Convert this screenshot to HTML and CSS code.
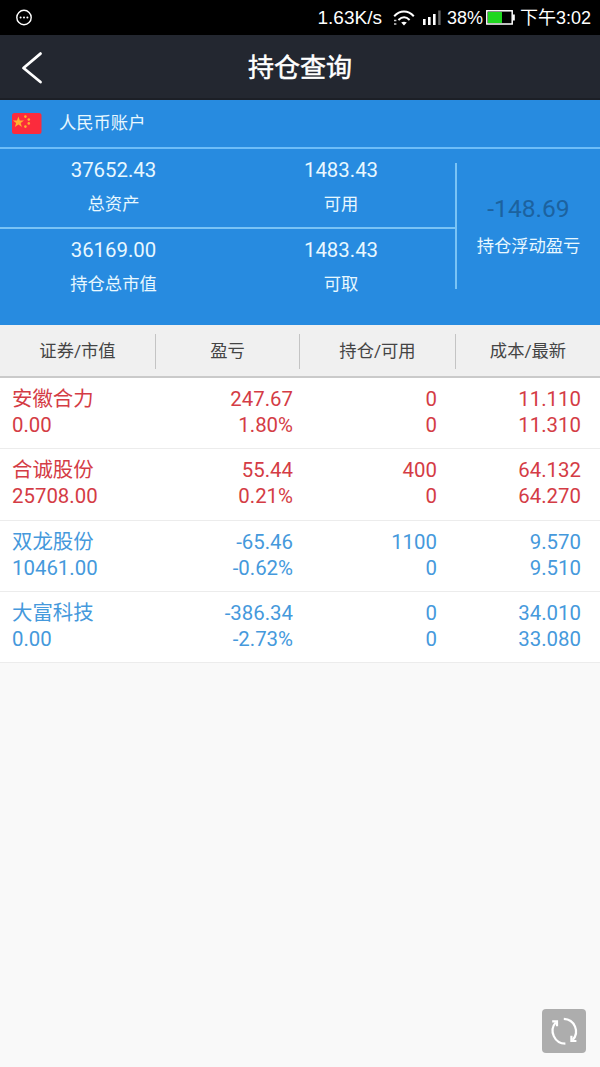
FILE: index.html
```
<!DOCTYPE html>
<html lang="zh-CN">
<head>
    <meta charset="UTF-8">
    <meta name="viewport" content="width=device-width, initial-scale=1.0">
    <title>持仓查询</title>
    <link rel="stylesheet" href="styles.css">
</head>
<body>
    <div class="status-bar">
        <svg class="status-msg" width="18" height="18" viewBox="0 0 18 18">
            <circle cx="9" cy="8.5" r="7.2" fill="none" stroke="#fff" stroke-width="1.4"/>
            <g fill="#fff">
                <circle cx="5.6" cy="8.5" r="1"/>
                <circle cx="9" cy="8.5" r="1"/>
                <circle cx="12.4" cy="8.5" r="1"/>
            </g>
        </svg>
        <span class="net-speed">1.63K/s</span>
        <svg class="wifi" width="22" height="18" viewBox="0 0 22 18">
            <g fill="none" stroke="#fff" stroke-width="2">
                <path d="M1.2 7.2C7 1 15 1 20.8 7.2"/>
                <path d="M5.4 11C9 7.6 13.2 7.6 16.6 11"/>
            </g>
            <path d="M8.2 13.6Q11 11.8 13.8 13.6L11 16.4Z" fill="#fff"/>
            <path d="M1 11.5h2.4M1 15h2.4" stroke="#ccc" stroke-width="1.6"/>
        </svg>
        <svg class="signal" width="18" height="16" viewBox="0 0 18 16">
            <g fill="#fff">
                <rect x="0" y="9" width="2.6" height="6"/>
                <rect x="5" y="7" width="2.6" height="8"/>
                <rect x="10" y="4" width="2.6" height="11"/>
            </g>
            <rect x="15.2" y="0.5" width="2.4" height="14.5" fill="#666"/>
        </svg>
        <span class="battery-text">38%</span>
        <svg class="battery" width="30" height="15" viewBox="0 0 30 15">
            <rect x="0.8" y="0.8" width="25.4" height="13.2" fill="none" stroke="#fff" stroke-width="1.5"/>
            <rect x="2" y="2" width="14" height="11" fill="#1fd71f"/>
            <rect x="26.8" y="4.5" width="2" height="6" fill="#fff"/>
        </svg>
        <span class="clock">下午3:02</span>
    </div>

    <div class="title-bar">
        <svg class="back" width="22" height="34" viewBox="0 0 22 34">
            <path d="M19.5 3.6L2.5 18L19.5 32" fill="none" stroke="#fff" stroke-width="2.8" stroke-linecap="round" stroke-linejoin="round"/>
        </svg>
        <h1>持仓查询</h1>
    </div>

    <div class="account">
        <svg class="flag" width="30" height="22" viewBox="0 0 30 22">
            <rect width="29.5" height="21" rx="2.5" fill="#fb2b3c"/>
            <g fill="#ffb12e">
                <path d="M6.4 3.4L7.8 7.4H12L8.7 9.9L9.9 13.9L6.4 11.5L2.9 13.9L4.1 9.9L0.9 7.4H5Z"/>
                <circle cx="13.4" cy="3.6" r="1.3"/>
                <circle cx="16.8" cy="6.6" r="1.3"/>
                <circle cx="16.8" cy="10.4" r="1.3"/>
                <circle cx="13.4" cy="13.6" r="1.3"/>
            </g>
        </svg>
        <span>人民币账户</span>
    </div>

    <div class="summary">
        <div class="assets">
            <div class="asset"><b>37652.43</b><span>总资产</span></div>
            <div class="asset"><b>1483.43</b><span>可用</span></div>
            <div class="asset"><b>36169.00</b><span>持仓总市值</span></div>
            <div class="asset"><b>1483.43</b><span>可取</span></div>
        </div>
        <div class="profit"><b>-148.69</b><span>持仓浮动盈亏</span></div>
    </div>

    <div class="table-head">
        <div>证券/市值</div>
        <div>盈亏</div>
        <div>持仓/可用</div>
        <div>成本/最新</div>
    </div>

    <div class="stocks">
        <div class="stock up">
            <div>安徽合力<br>0.00</div>
            <div>247.67<br>1.80%</div>
            <div>0<br>0</div>
            <div>11.110<br>11.310</div>
        </div>
        <div class="stock up">
            <div>合诚股份<br>25708.00</div>
            <div>55.44<br>0.21%</div>
            <div>400<br>0</div>
            <div>64.132<br>64.270</div>
        </div>
        <div class="stock down">
            <div>双龙股份<br>10461.00</div>
            <div>-65.46<br>-0.62%</div>
            <div>1100<br>0</div>
            <div>9.570<br>9.510</div>
        </div>
        <div class="stock down">
            <div>大富科技<br>0.00</div>
            <div>-386.34<br>-2.73%</div>
            <div>0<br>0</div>
            <div>34.010<br>33.080</div>
        </div>
    </div>

    <button class="refresh" aria-label="刷新">
        <svg width="44" height="44" viewBox="0 0 44 44">
            <g fill="none" stroke="#fff" stroke-width="2.2">
                <path d="M21.8 9.8A12.6 12.6 0 0 1 30.6 31"/>
                <path d="M23.4 34.6A12.8 12.8 0 0 1 13.8 13.4"/>
                <path d="M10.2 12.4H15V17.2M34.4 32H29.4V26.8"/>
            </g>
        </svg>
    </button>
</body>
</html>
```

FILE: styles.css
```
* {
    box-sizing: border-box;
}

body {
    margin: 0;
    min-height: 1067px;
    font-family: Roboto, "Noto Sans CJK SC", sans-serif;
    background-color: #f9f9f9;
}

svg {
    display: block;
    flex: none;
}

.status-bar {
    display: flex;
    align-items: center;
    height: 35px;
    padding: 0 9px 0 15px;
    background-color: #000;
    color: #fff;
    font-family: "Liberation Sans", "Noto Sans CJK SC", sans-serif;
    font-size: 18.5px;
    line-height: 35px;
    white-space: nowrap;
}

.net-speed {
    margin-left: auto;
    font-size: 19px;
}

.wifi {
    margin-left: 11px;
}

.signal {
    margin-left: 8px;
}

.battery-text {
    margin-left: 6px;
    padding-top: 2px;
    font-size: 18px;
}

.battery {
    margin-left: 3px;
}

.clock {
    margin-left: 4px;
    padding-top: 2px;
    font-size: 18px;
}

.title-bar {
    display: grid;
    grid-template-columns: 60px 1fr 60px;
    align-items: center;
    height: 65px;
    background-color: #232730;
    border-bottom: 2px solid #1c1f26;
    color: #fff;
}

.back {
    margin-left: 21px;
}

.title-bar h1 {
    margin: 0;
    padding-top: 3px;
    font-size: 26px;
    font-weight: 400;
    line-height: 36px;
    text-align: center;
    -webkit-text-stroke: 0.5px #fff;
}

.account {
    display: flex;
    align-items: center;
    gap: 17px;
    height: 49px;
    padding-left: 12px;
    background-color: #278be0;
    border-bottom: 2px solid #6dbdf8;
    color: #e8f8ff;
    font-size: 17.3px;
    line-height: 26px;
}

.account span {
    padding-bottom: 1px;
}

.summary {
    display: flex;
    height: 176px;
    background-color: #278be0;
    color: #e8f8ff;
    font-size: 17.3px;
    text-align: center;
}

.summary b,
.summary span {
    display: block;
    font-weight: 400;
}

.assets {
    display: grid;
    grid-template-columns: 227px 228px;
    grid-template-rows: 80px 80px;
}

.asset {
    padding-top: 7px;
}

.asset:nth-child(-n+2) {
    border-bottom: 2px solid #79c3f5;
}

.asset b {
    font-size: 20.4px;
    line-height: 28px;
}

.asset span {
    margin-top: 7px;
    line-height: 26px;
}

.profit {
    width: 145px;
    height: 126px;
    margin-top: 14px;
    padding-top: 29px;
    border-left: 2px solid #79c3f5;
}

.profit b {
    color: #1c629f;
    font-size: 24.6px;
    line-height: 34px;
}

.profit span {
    margin-top: 7px;
    line-height: 26px;
}

.table-head,
.stock {
    display: grid;
    grid-template-columns: 156px 144px 156px 144px;
}

.table-head {
    height: 53px;
    padding-top: 9px;
    background-color: #f0f0f0;
    border-bottom: 2px solid #cacaca;
    color: #444;
    font-size: 17.3px;
    line-height: 35px;
    text-align: center;
}

.table-head div {
    height: 35px;
    border-right: 1px solid #c4c4c4;
}

.table-head div:last-child {
    border-right: none;
}

.stock {
    height: 71.3px;
    padding-top: 8px;
    background-color: #fff;
    border-bottom: 1px solid #ececec;
    font-size: 20.4px;
    line-height: 26px;
    text-align: right;
}

.stock div:nth-child(1) {
    padding-left: 12px;
    text-align: left;
}

.stock div:nth-child(2) {
    padding-right: 7px;
}

.stock div:nth-child(3),
.stock div:nth-child(4) {
    padding-right: 19px;
}

.up {
    color: #d43c45;
}

.down {
    color: #4599dc;
}

/* floats over the list */
.refresh {
    position: fixed;
    right: 14px;
    bottom: 14px;
    width: 44px;
    height: 44px;
    padding: 0;
    border: none;
    border-radius: 4px;
    background-color: #adadad;
    cursor: pointer;
}
```
